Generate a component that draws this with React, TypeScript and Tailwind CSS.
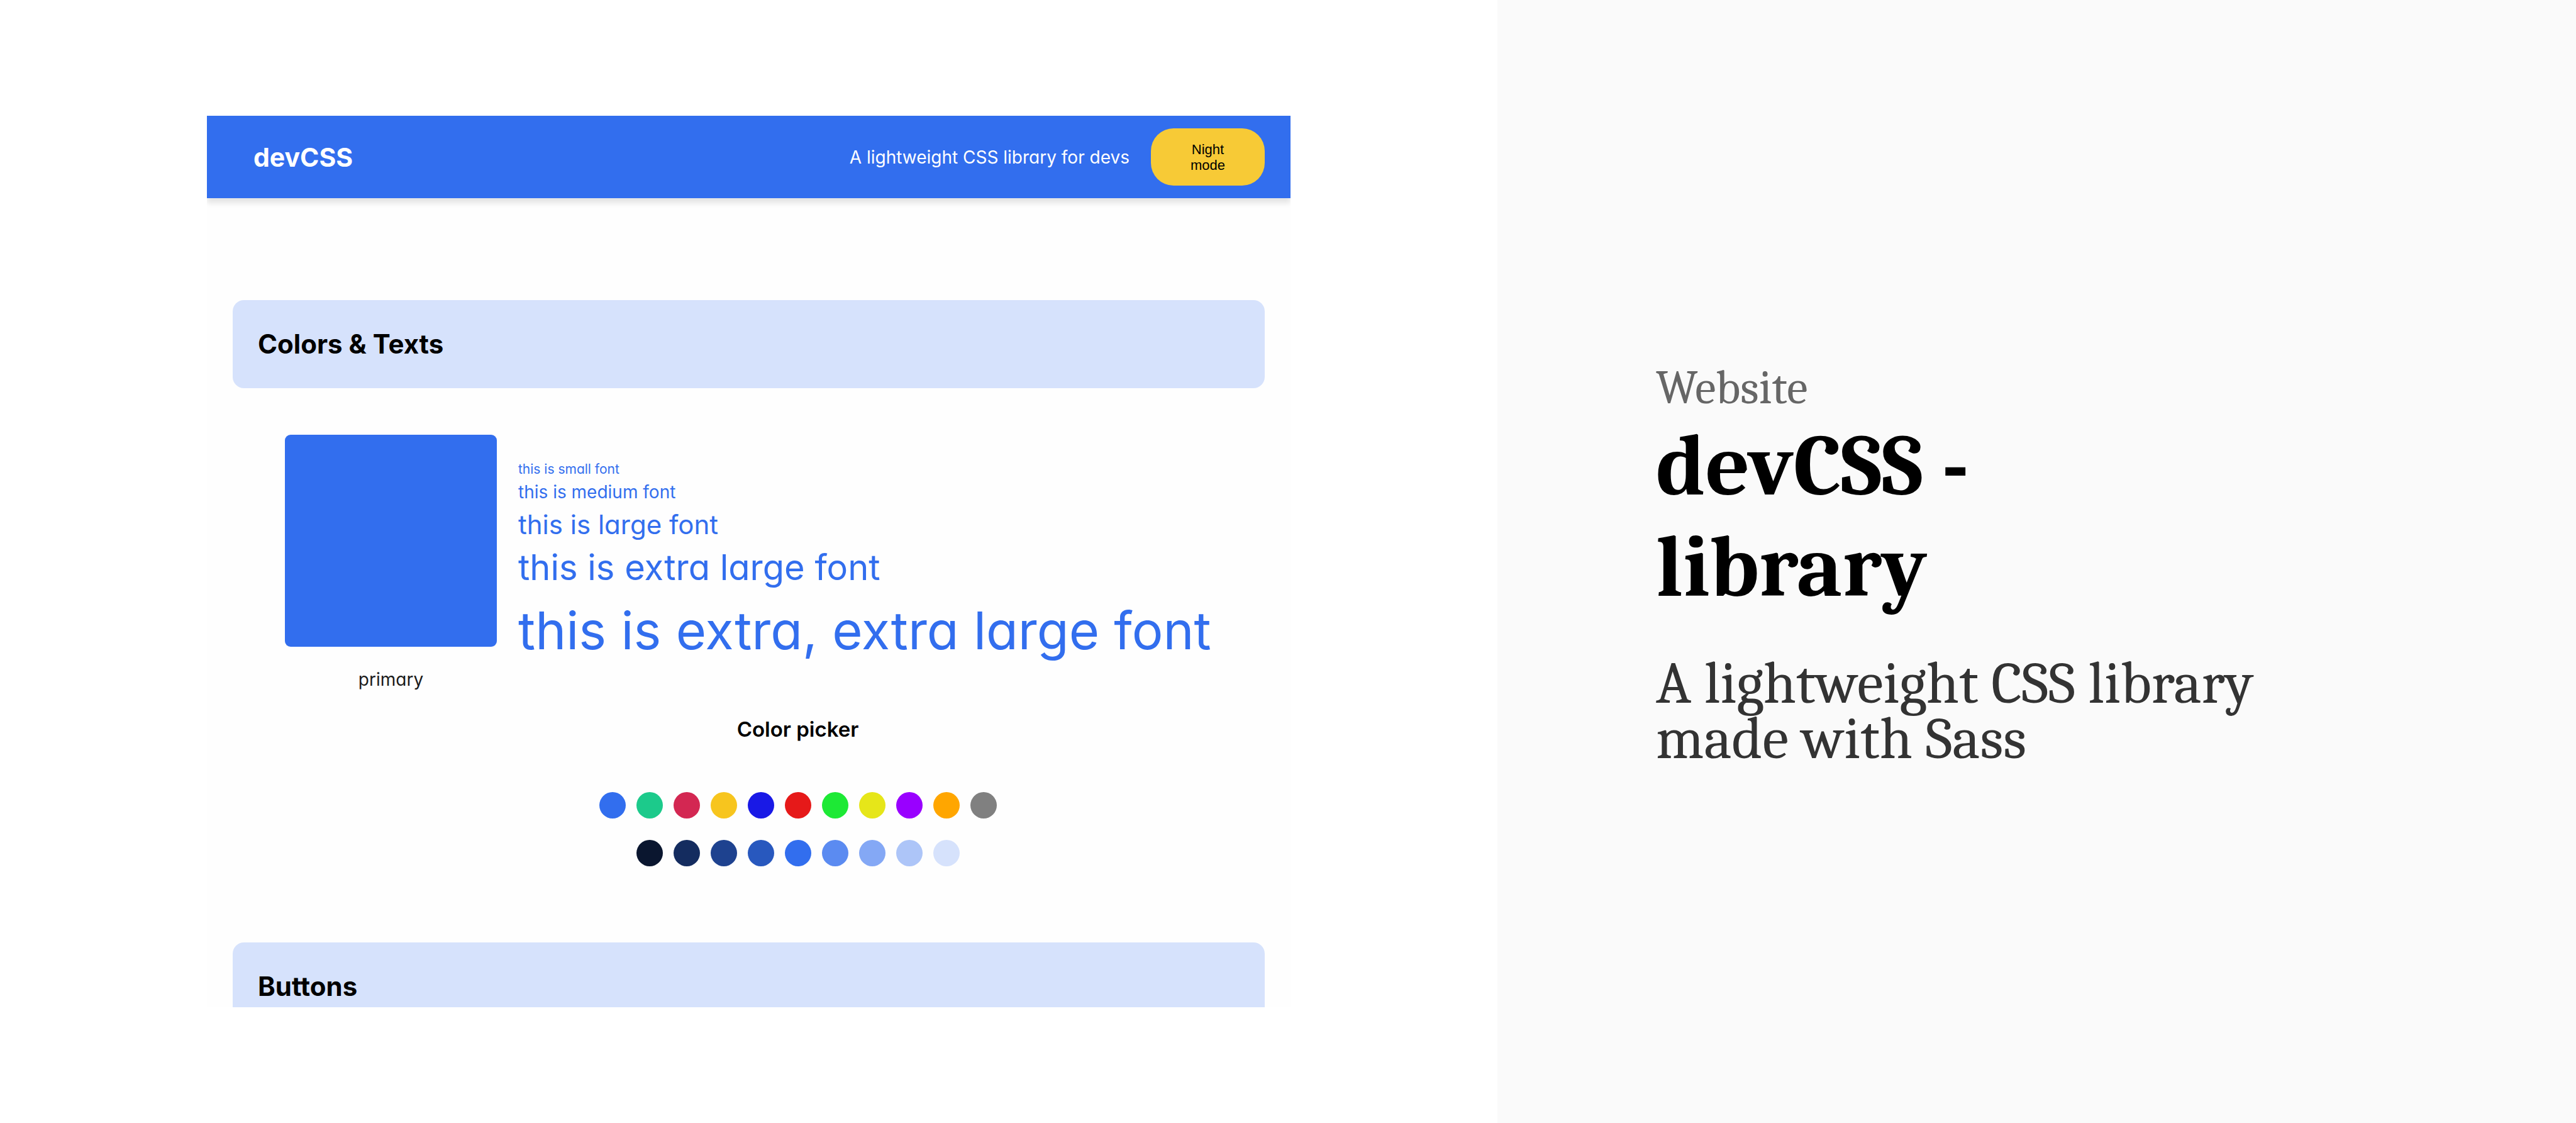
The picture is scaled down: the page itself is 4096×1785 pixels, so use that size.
const palette = [
  { name: "Blue", tone: "bg-[#326eee]" },
  { name: "Green", tone: "bg-[#1cca8b]" },
  { name: "Crimson", tone: "bg-[#d32752]" },
  { name: "Amber", tone: "bg-[#f7c51e]" },
  { name: "Indigo", tone: "bg-[#1919e6]" },
  { name: "Red", tone: "bg-[#e61919]" },
  { name: "Lime", tone: "bg-[#1de935]" },
  { name: "Yellow", tone: "bg-[#e6e619]" },
  { name: "Purple", tone: "bg-[#9900ff]" },
  { name: "Orange", tone: "bg-[#ffa600]" },
  { name: "Gray", tone: "bg-[#808080]" },
];

const shades = [
  { name: "Blue 900", tone: "bg-[#0a162f]" },
  { name: "Blue 800", tone: "bg-[#142c5f]" },
  { name: "Blue 700", tone: "bg-[#1e428f]" },
  { name: "Blue 600", tone: "bg-[#2858be]" },
  { name: "Blue 500", tone: "bg-[#326eee]" },
  { name: "Blue 400", tone: "bg-[#5b8bf1]" },
  { name: "Blue 300", tone: "bg-[#84a8f5]" },
  { name: "Blue 200", tone: "bg-[#adc5f8]" },
  { name: "Blue 100", tone: "bg-[#d6e2fc]" },
];

function Dots({ items }: { items: { name: string; tone: string }[] }) {
  return (
    <div className="flex justify-center gap-[17px]">
      {items.map((item) => (
        <button
          key={item.name}
          type="button"
          aria-label={item.name}
          className={`size-[42px] rounded-full ${item.tone}`}
        />
      ))}
    </div>
  );
}

function SectionTitle({ children }: { children: string }) {
  return (
    <h2 className="flex h-[140px] items-center rounded-[18px] bg-[#d6e2fc] px-[40px] text-[42px] leading-[60px] font-bold text-black">
      {children}
    </h2>
  );
}

function Preview() {
  return (
    <div className="min-h-0 flex-1 overflow-hidden bg-[#fefefe] font-['Inter',sans-serif] [font-feature-settings:'cv11']">
      <header className="flex h-[131px] items-center bg-[#326eee] pr-[41px] pl-[74px] text-white shadow-[0_8px_8px_rgba(0,0,0,0.1)]">
        <p className="text-[41px] leading-[60px] font-bold">devCSS</p>
        <p className="ml-auto text-[28px] leading-[40px]">A lightweight CSS library for devs</p>
        <button
          type="button"
          className="ml-[34px] h-[91px] w-[181px] rounded-[36px] bg-[#f7ca36] px-[50px] font-['Liberation_Sans',sans-serif] text-[22px] leading-[25px] text-black"
        >
          Night mode
        </button>
      </header>

      <main className="px-[41px] pt-[162px]">
        <section>
          <SectionTitle>Colors &amp; Texts</SectionTitle>
          <div className="flex h-[484px] gap-[34px] pt-[74px] pl-[83px]">
            <figure className="w-[337px] shrink-0">
              <div className="h-[337px] rounded-[9px] bg-[#326eee]" />
              <figcaption className="mt-8 text-center text-[28px] leading-[40px] text-[#1a1a1a]">
                primary
              </figcaption>
            </figure>
            <div className="pt-[40px] whitespace-nowrap text-[#326eee]">
              <p className="text-[21px] leading-[30px]">this is small font</p>
              <p className="text-[28px] leading-[42px]">this is medium font</p>
              <p className="text-[42px] leading-[62px]">this is large font</p>
              <p className="text-[56px] leading-[74px]">this is extra large font</p>
              <p className="text-[83px] leading-[126px]">this is extra, extra large font</p>
            </div>
          </div>
          <div className="pt-[34px] pl-[156px]">
            <h3 className="mb-[76px] text-center text-[33px] leading-[48px] font-semibold text-black">
              Color picker
            </h3>
            <Dots items={palette} />
            <div className="h-[34px]" />
            <Dots items={shades} />
          </div>
        </section>
        <section className="pt-[121px]">
          <SectionTitle>Buttons</SectionTitle>
        </section>
      </main>
    </div>
  );
}

export default function App() {
  return (
    <div className="grid h-screen grid-cols-[2381fr_1715fr] bg-white">
      <div className="flex min-h-0 min-w-0 flex-col px-[329px] py-[184px]">
        <Preview />
      </div>
      <aside className="flex min-w-0 flex-col justify-center bg-[#fafafa] pt-[6px] pl-[252px] font-['Cambria','Caladea','Liberation_Serif',serif] whitespace-nowrap">
        <p className="text-[75px] leading-[88px] text-[#666666]">Website</p>
        <h1 className="text-[138px] leading-[161px] font-bold text-black">
          devCSS -<br />
          library
        </h1>
        <p className="mt-[60px] text-[94px] leading-[88px] text-[#333333]">
          A lightweight CSS library
          <br />
          made with Sass
        </p>
      </aside>
    </div>
  );
}
